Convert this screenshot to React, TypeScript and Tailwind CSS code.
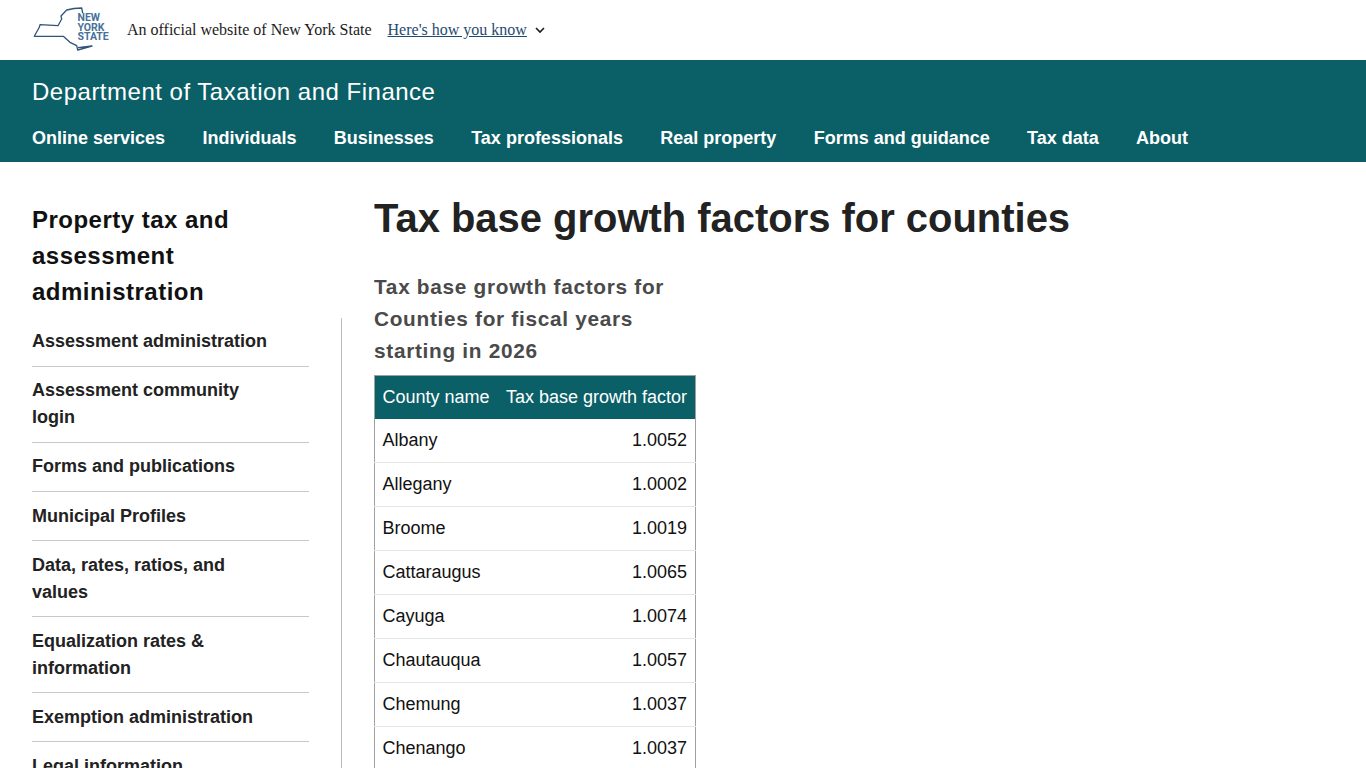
const nav = ["Online services","Individuals","Businesses","Tax professionals","Real property","Forms and guidance","Tax data","About"];
const side = ["Assessment administration","Assessment community login","Forms and publications","Municipal Profiles","Data, rates, ratios, and values","Equalization rates & information","Exemption administration","Legal information"];
const rows = [["Albany","1.0052"],["Allegany","1.0002"],["Broome","1.0019"],["Cattaraugus","1.0065"],["Cayuga","1.0074"],["Chautauqua","1.0057"],["Chemung","1.0037"],["Chenango","1.0037"]];

export default function App() {
  return (
    <div className="h-screen overflow-hidden bg-white font-['Liberation_Sans',sans-serif] text-[#1b1b1b]">
      <div className="h-[60px] flex items-center pl-[32px]">
        <div className="relative w-[80px] h-[50px]">
          <svg className="absolute left-0 top-0" width="80" height="50" viewBox="0 0 80 50" fill="none">
            <path d="M50.7 8 L49.7 3 L42 3.5 L34.7 5 L29 11 L29.7 14 L26 20.7 L17 20.2 L8 19.7 L7.3 22.3 L2.3 31.3 L31.3 31.3 L38 37.3 L44.7 40.7 L45.7 45 L60 41 L46 42.7" stroke="#2f5578" strokeWidth="1.3" strokeLinejoin="round"/>
          </svg>
          <div className="absolute left-[45.5px] top-[8px] text-[#47709a] font-bold text-[10.5px] leading-[9.5px] font-['Roboto',sans-serif]">
            <div>NEW</div>
            <div>YORK</div>
            <div>STATE</div>
          </div>
        </div>
        <span className="ml-[15px] font-['Liberation_Serif',serif] text-[16px] text-[#1b1b1b]">An official website of New York State</span>
        <a className="ml-[16px] font-['Liberation_Serif',serif] text-[16px] text-[#1f4a73] underline">Here's how you know</a>
        <svg className="ml-[7px]" width="12" height="12" viewBox="0 0 12 12" fill="none"><path d="M2 4 L6 8 L10 4" stroke="#1b1b1b" strokeWidth="1.6"/></svg>
      </div>
      <header className="h-[102px] bg-[#0b5f67] text-white pl-[32px]">
        <div className="pt-[16px] text-[24px] leading-[32px] tracking-[0.5px]">Department of Taxation and Finance</div>
        <nav className="mt-[18px] flex gap-[37.35px] text-[18px] leading-[24px] font-bold">
          {nav.map(n => <a key={n}>{n}</a>)}
        </nav>
      </header>
      <div className="flex">
        <aside className="w-[342px] shrink-0 pt-[40px] pl-[32px]">
          <h2 className="text-[24px] leading-[36px] font-bold tracking-[0.48px] text-[#111] w-[250px]">Property tax and assessment administration</h2>
          <ul className="mt-[8px] border-r border-[#bbbbbb] pr-[32px]">
            {side.map(s => (
              <li key={s} className="border-b border-[#c8c8c8] pt-[10.36px] pb-[10.71px] text-[18px] leading-[27px] font-bold text-[#222] pr-[30px]">{s}</li>
            ))}
          </ul>
        </aside>
        <main className="pl-[32px] pt-[31px]">
          <h1 className="text-[39.95px] leading-[50px] font-bold text-[#222]">Tax base growth factors for counties</h1>
          <h3 className="mt-[28px] w-[322px] text-[20.8px] leading-[32px] font-bold tracking-[0.7px] text-[#4a4a4a]">Tax base growth factors for Counties for fiscal years starting in 2026</h3>
          <table className="mt-[8px] w-[322px] border border-[#a0a0a0] border-collapse text-[18px]">
            <thead>
              <tr className="bg-[#0b5f67] text-white h-[43px]">
                <th className="font-normal text-left pl-[7.5px]">County name</th>
                <th className="font-normal text-right pr-[8px]">Tax base growth factor</th>
              </tr>
            </thead>
            <tbody>
              {rows.map(r => (
                <tr key={r[0]} className="h-[44px] border-b border-[#e6e6e6] text-[#111]">
                  <td className="pl-[7.5px]">{r[0]}</td>
                  <td className="text-right pr-[8px]">{r[1]}</td>
                </tr>
              ))}
            </tbody>
          </table>
        </main>
      </div>
    </div>
  );
}
